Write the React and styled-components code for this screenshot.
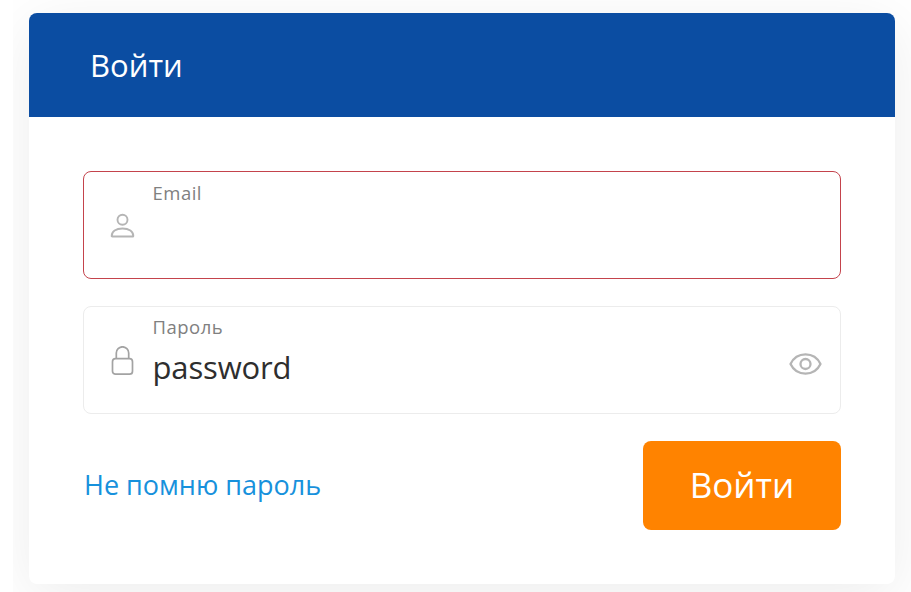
import React, { useState } from 'react';
import styled, { createGlobalStyle } from 'styled-components';

const GlobalStyle = createGlobalStyle`
  * { box-sizing: border-box; }
  body {
    margin: 0;
    background: #fff;
    overflow: hidden;
    font-family: "Open Sans", "Noto Sans", sans-serif;
  }
`;

const Page = styled.main`
  height: 592px;
  margin-left: 13px;
  padding: 13px 16px 8px;
  overflow: hidden;
  background: #fff;
`;

const Card = styled.form`
  height: 571px;
  border-radius: 8px;
  background: #fff;
  box-shadow: 0 12px 60px rgba(0, 0, 0, 0.075);
`;

const Header = styled.header`
  display: flex;
  align-items: center;
  height: 104px;
  padding: 0 61px;
  border-radius: 8px 8px 0 0;
  background: #0b4da2;
`;

const Title = styled.h1`
  margin: 0;
  color: #fff;
  font-size: 31px;
  font-weight: 400;
  line-height: 42px;
`;

const Body = styled.div`
  display: flex;
  flex-direction: column;
  gap: 27px;
  padding: 54px 54px 0;
`;

const Field = styled.label`
  display: grid;
  grid-template-columns: 42.5px 1fr 34px;
  height: 108px;
  padding: 0 18px 0 26px;
  border: 1px solid ${({ $invalid }) => ($invalid ? '#c4434c' : '#ececec')};
  border-radius: 8px;
  background: #fff;
`;

const IconSlot = styled.span`
  display: flex;
  padding-top: ${({ $top }) => $top}px;
`;

const FieldText = styled.span`
  display: flex;
  flex-direction: column;
  min-width: 0;
  padding-top: ${({ $top }) => $top}px;
`;

const Caption = styled.span`
  color: #808080;
  font-size: 18.5px;
  line-height: 24px;
  letter-spacing: 0.5px;
`;

const Input = styled.input`
  width: 100%;
  height: 44px;
  margin-top: 6px;
  padding: 0;
  border: 0;
  outline: 0;
  background: transparent;
  color: #2e2e2e;
  font: 400 31px/44px "Open Sans", "Noto Sans", sans-serif;
  letter-spacing: -0.15px;
`;

const RevealButton = styled.button`
  display: flex;
  align-self: start;
  margin-top: 45px;
  padding: 0;
  border: 0;
  background: none;
`;

const Actions = styled.div`
  display: flex;
  align-items: center;
  justify-content: space-between;
  height: 89px;
`;

const ForgotLink = styled.a`
  padding: 0 0 2px 1px;
  color: #1791dc;
  font-size: 27px;
  line-height: 38px;
  text-decoration: none;
`;

const SubmitButton = styled.button`
  width: 198px;
  height: 89px;
  padding: 0 0 2px;
  border: 0;
  border-radius: 8px;
  background: #ff8300;
  color: #fff;
  font: 400 35px/48px "Open Sans", "Noto Sans", sans-serif;
`;

const UserIcon = () => (
  <svg width="25" height="26" viewBox="-0.500 0 25 26" fill="none" stroke="#b5b5b5" strokeWidth="1.9" strokeLinejoin="round">
    <circle cx="12" cy="6.700" r="5" />
    <path d="M1.200 22.900C1.200 18.500 5.400 15.500 12 15.500S22.800 18.500 22.800 22.900Q22.800 23.500 22.200 23.500H1.800Q1.200 23.500 1.200 22.900Z" />
  </svg>
);

const LockIcon = () => (
  <svg width="25" height="30" viewBox="-0.500 0 25 30" fill="none" stroke="#a3a3a3" strokeWidth="1.7">
    <path d="M5.8 12.700V7a6.200 6.200 0 0 1 12.400 0V12.700" />
    <rect x="2" y="12.700" width="20" height="15.500" rx="3" />
  </svg>
);

const EyeIcon = () => (
  <svg width="34" height="24" viewBox="-0.500 0 34 24" fill="none" stroke="#b5b5b5" strokeWidth="2.300" strokeLinejoin="round">
    <path d="M2 12C5.200 5.400 10.400 2.400 17 2.400S28.800 5.400 32 12C28.800 18.600 23.600 21.600 17 21.600S5.200 18.600 2 12Z" />
    <circle cx="17" cy="12" r="5" />
  </svg>
);

export default function App() {
  const [email, setEmail] = useState('');
  const [password, setPassword] = useState('password');

  return (
    <>
      <GlobalStyle />
      <Page>
        <Card onSubmit={(e) => e.preventDefault()}>
          <Header>
            <Title>Войти</Title>
          </Header>
          <Body>
            <Field $invalid>
              <IconSlot $top={41}><UserIcon /></IconSlot>
              <FieldText $top={9}>
                <Caption>Email</Caption>
                <Input value={email} onChange={(e) => setEmail(e.target.value)} />
              </FieldText>
            </Field>
            <Field>
              <IconSlot $top={39}><LockIcon /></IconSlot>
              <FieldText $top={8}>
                <Caption>Пароль</Caption>
                <Input value={password} onChange={(e) => setPassword(e.target.value)} />
              </FieldText>
              <RevealButton type="button"><EyeIcon /></RevealButton>
            </Field>
            <Actions>
              <ForgotLink href="#">Не помню пароль</ForgotLink>
              <SubmitButton type="submit">Войти</SubmitButton>
            </Actions>
          </Body>
        </Card>
      </Page>
    </>
  );
}
